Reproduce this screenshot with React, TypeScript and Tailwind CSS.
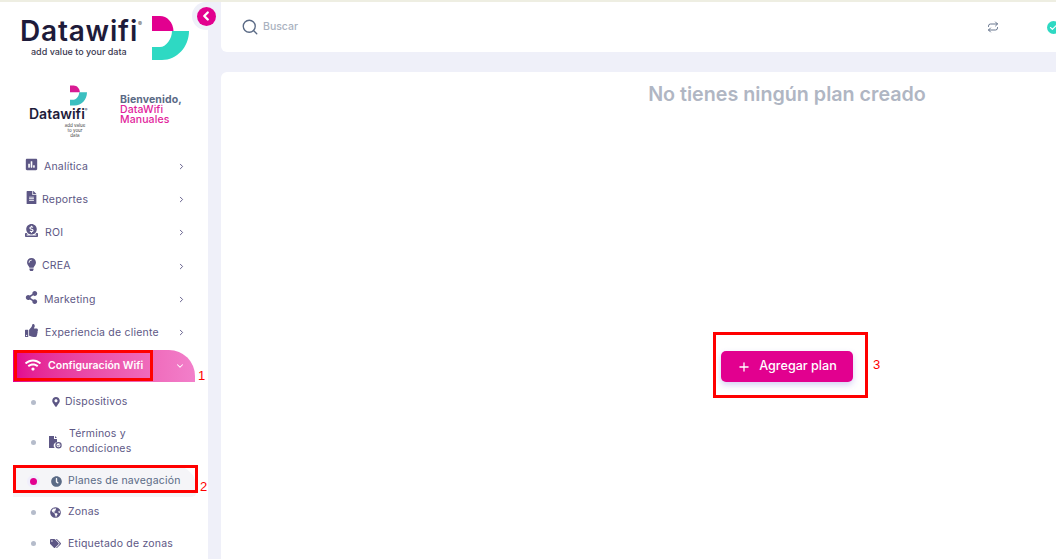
import React from "react";
import { ChevronRight, ChevronDown, ChevronLeft, Search, Repeat, Check, Plus } from "lucide-react";
import { FaPoll, FaFileAlt, FaLightbulb, FaShareAlt, FaThumbsUp, FaWifi, FaMapMarkerAlt, FaClock, FaGlobeAmericas, FaTags, FaDonate } from "react-icons/fa";

const font = { fontFamily: "Inter, 'Noto Sans', sans-serif" };
const redFont = { fontFamily: "'Liberation Sans', sans-serif" };

function LogoMark({ w, h, pink, teal }: { w: number; h: number; pink: string; teal: string }) {
  return (
    <svg width={w} height={h} viewBox="0 0 37 44" className="shrink-0">
      <path d="M0 0H8C15 0 21 6 21.5 15H0Z" fill={pink} />
      <path d="M0 44V31H8C14 31 20 23 20 15H37C37 31 25 44 10 44Z" fill={teal} />
    </svg>
  );
}

function FileBadge() {
  return (
    <svg width="13" height="13" viewBox="0 0 13 13" fill="currentColor">
      <path d="M0 0H5V3H8V6.2A3.4 3.4 0 0 0 5.6 12H0Z" />
      <path d="M6 0L8 2H6Z" />
      <circle cx="9.5" cy="9.3" r="2.6" fill="none" stroke="currentColor" strokeWidth="1.2" />
      <path d="M8.4 9.4L9.3 10.2L10.6 8.6" fill="none" stroke="currentColor" strokeWidth="0.9" />
    </svg>
  );
}

const menu = [
  { icon: <FaPoll size={13} />, label: "Analítica", text: "ml-[6px]", h: "h-[33px]" },
  { icon: <FaFileAlt size={13} />, label: "Reportes", text: "ml-[4px]", h: "h-[33px]" },
  { icon: <FaDonate size={13} />, label: "ROI", text: "ml-[7px]", h: "h-[33px]" },
  { icon: <FaLightbulb size={13} />, label: "CREA", text: "ml-[4px]", h: "h-[34px]" },
  { icon: <FaShareAlt size={13} />, label: "Marketing", text: "ml-[6px]", h: "h-[33px]" },
  { icon: <FaThumbsUp size={13} />, label: "Experiencia de cliente", text: "ml-[7px]", h: "h-[33px]" },
];

function SubItem({ icon, label, active, h, textClass }: { icon: React.ReactNode; label: React.ReactNode; active?: boolean; h: string; textClass: string }) {
  return (
    <div className={`flex items-center ${h} ${active ? "bg-[#f5f5f8] rounded-tr-[24px] rounded-br-[6px] ml-[13px] pl-[17px] mr-[11px]" : "pl-[31px]"}`}>
      <span className={`rounded-full shrink-0 ${active ? "w-[7px] h-[7px] bg-[#e2008f] ring-[3px] ring-[#f0eefb]" : "w-[5px] h-[5px] bg-[#b5bccb]"}`} />
      <span className={`shrink-0 flex justify-center w-[13px] ${active ? "ml-[13px] text-[#5a6a85]" : "ml-[13px] text-[#5d5785]"}`}>{icon}</span>
      <span className={`text-[10.5px] tracking-[0.2px] leading-[15.5px] whitespace-pre-line ${textClass} ${active ? "text-[#5a6a85]" : "text-[#5d5785]"}`}>{label}</span>
    </div>
  );
}

export default function App() {
  return (
    <div className="relative w-[1056px] h-[559px] overflow-hidden bg-[#eff0f9]" style={font}>
      <div className="h-[2px] bg-[#eeeee2]" />
      <div className="flex h-[557px]">
        <aside className="relative w-[208px] shrink-0 bg-white">
          <div className="flex items-start pl-[20px] pt-[14px] h-[72px]">
            <div className="w-[132px] flex flex-col items-start">
              <div className="mt-[1px] text-[28px] leading-[28px] font-semibold text-[#1e1b3a] tracking-[0.8px] flex">
                Datawifi<span className="text-[6px] leading-[14px] text-[#555]">®</span>
              </div>
              <div className="text-[9px] leading-[10px] mt-[2px] ml-[11px] font-medium text-[#3a3850] whitespace-nowrap">add value to your data</div>
            </div>
            <LogoMark w={37} h={44} pink="#e2008f" teal="#2ed9c3" />
          </div>
          <button className="absolute left-[192px] top-[0px] w-[28px] h-[28px] rounded-full bg-[#eff0f9] flex items-center justify-center">
            <span className="w-[19px] h-[19px] rounded-full bg-[#e2008f] flex items-center justify-center">
              <ChevronLeft size={14} strokeWidth={4} className="text-white" />
            </span>
          </button>
          <div className="flex h-[72px] pl-[29px] pt-[11px]">
            <div className="w-[62px] flex flex-col items-center">
              <div className="w-full pl-[41px]">
                <LogoMark w={17} h={21} pink="#d81b93" teal="#3bbfc0" />
              </div>
              <div className="w-full text-[14px] leading-[16px] font-semibold text-[#1e1b3a] flex">
                Datawifi<span className="text-[4px] leading-[8px]">®</span>
              </div>
              <div className="text-[4.5px] leading-[5px] text-center text-[#444] w-[22px] h-[15px] overflow-hidden mt-[1px] ml-[30px] shrink-0">add value to your data</div>
            </div>
            <div className="ml-[29px] pt-[10px] text-[10.5px] leading-[10px] tracking-[0.1px]">
              <div className="text-[#5a6a85] font-bold">Bienvenido,</div>
              <div className="text-[#e2249c] font-medium">DataWifi</div>
              <div className="text-[#e2249c] font-medium">Manuales</div>
            </div>
          </div>
          <nav className="pt-[4px]">
            {menu.map((m) => (
              <div key={m.label} className={`flex items-center pl-[25px] pr-[22px] text-[#5d5785] ${m.h}`}>
                <span className="mb-[4px] shrink-0 w-[13px]">{m.icon}</span>
                <span className={`${m.text} text-[10.5px] tracking-[0.2px]`}>{m.label}</span>
                <ChevronRight size={9} strokeWidth={2.5} className="ml-auto text-[#5d5785]" />
              </div>
            ))}
            <div className="mt-[1px] ml-[13px] mr-[13px] h-[32px] rounded-tr-[26px] flex items-center pl-[12px] pr-[10px] text-white bg-gradient-to-r from-[#e2008f] to-[#f27fca]">
              <FaWifi size={16} className="mb-[2px]" />
              <span className="ml-[7px] text-[10.5px] font-semibold">Configuración Wifi</span>
              <ChevronDown size={10} strokeWidth={2.5} className="ml-auto" />
            </div>
            <div className="pt-[3px]">
              <SubItem h="h-[34px]" textClass="ml-[3px]" icon={<FaMapMarkerAlt size={10} />} label="Dispositivos" />
              <SubItem h="h-[46px]" textClass="ml-[3px]" icon={<FileBadge />} label={<span className="block ml-[4px] mb-[2px]">{"Términos y\ncondiciones"}</span>} />
              <SubItem h="h-[32px]" textClass="ml-[5px]" active icon={<FaClock size={11} />} label="Planes de navegación" />
              <SubItem h="h-[30px]" textClass="ml-[6px]" icon={<FaGlobeAmericas size={11} />} label="Zonas" />
              <SubItem h="h-[33px]" textClass="ml-[6px]" icon={<FaTags size={11} />} label="Etiquetado de zonas" />
            </div>
          </nav>
        </aside>
        <main className="w-[1145px] shrink-0 pl-[13px]">
          <header className="h-[50px] bg-white rounded-bl-[6px] flex items-center pl-[20px] text-[#5a6a85]">
            <Search size={18} strokeWidth={1.8} />
            <span className="ml-[4px] text-[10.5px] font-medium text-[#aab2c0] whitespace-nowrap">Buscar</span>
            <Repeat size={12} strokeWidth={1.8} className="ml-[689px]" />
            <span className="ml-[48px] w-[13px] h-[13px] rounded-full bg-[#2ed9c3] flex items-center justify-center shrink-0">
              <Check size={9} strokeWidth={3} className="text-white" />
            </span>
          </header>
          <section className="mt-[20px] h-[490px] bg-white rounded-tl-[6px] flex flex-col items-center">
            <h2 className="mt-[9px] text-[19.7px] leading-[26px] font-semibold text-[#b0b6c3]">No tienes ningún plan creado</h2>
            <button className="mt-[244px] w-[132px] h-[31px] rounded-[5px] bg-[#e2008f] text-white flex items-center justify-center shadow-[0_3px_6px_rgba(120,100,220,0.3)]">
              <Plus size={14} strokeWidth={2.2} />
              <span className="ml-[8px] text-[12.6px] font-medium">Agregar plan</span>
            </button>
          </section>
        </main>
      </div>
      <div className="absolute left-[14px] top-[350px] w-[139px] h-[31px] border-[3px] border-[#ff0000]" />
      <div className="absolute left-[13px] top-[465px] w-[185px] h-[28px] border-[3px] border-[#ff0000]" />
      <div className="absolute left-[713px] top-[332px] w-[155px] h-[66px] border-[3px] border-[#ff0000]" />
      <span className="absolute left-[198px] top-[368px] text-[13px] leading-[16px] text-[#ff0000]" style={redFont}>1</span>
      <span className="absolute left-[200px] top-[479px] text-[13px] leading-[16px] text-[#ff0000]" style={redFont}>2</span>
      <span className="absolute left-[873px] top-[357px] text-[13px] leading-[16px] text-[#ff0000]" style={redFont}>3</span>
    </div>
  );
}
